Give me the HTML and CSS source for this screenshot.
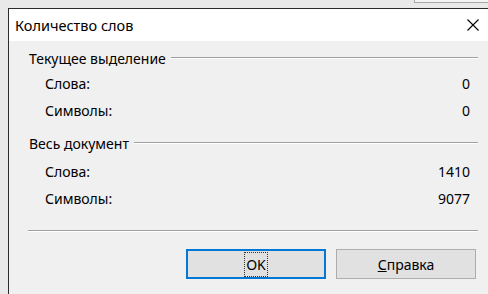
FILE: index.html
```html
<html>
  <head>
    <title>Количество слов</title>
    <link rel="stylesheet" href="styles.css">
  </head>
  <body>
    <div class="topstrip">
      <div class="behind"></div>
    </div>
    <div class="dialog">
      <div class="titlebar">
        <span class="title">Количество слов</span>
        <svg class="close" width="12" height="12" viewBox="0 0 12 12">
          <path d="M0.5 0.5 L11.5 11.5 M11.5 0.5 L0.5 11.5" stroke="#000" stroke-width="1.1" fill="none"/>
        </svg>
      </div>
      <div class="content">
        <div class="group">
          <div class="legend"><span>Текущее выделение</span><div class="rule"></div></div>
          <div class="row first"><span>Слова:</span><span>0</span></div>
          <div class="row"><span>Символы:</span><span>0</span></div>
        </div>
        <div class="group second">
          <div class="legend"><span>Весь документ</span><div class="rule"></div></div>
          <div class="row first"><span>Слова:</span><span>1410</span></div>
          <div class="row"><span>Символы:</span><span>9077</span></div>
        </div>
        <div class="separator"></div>
        <div class="buttons">
          <div class="button default"><span class="focus">OK</span></div>
          <div class="button"><span><u>С</u>правка</span></div>
        </div>
      </div>
    </div>
  </body>
</html>
```

FILE: styles.css
```css
html {
  background: #e9e9e9;
}
body {
  margin: 0;
  padding-left: 8px;
  font-family: "Noto Sans", "Liberation Sans", sans-serif;
  font-size: 14px;
  color: #000;
  overflow: hidden;
}
.topstrip {
  height: 8px;
  display: flex;
  justify-content: flex-end;
}
.behind {
  width: 73px;
  height: 2px;
  border-left: 1px solid #a8a8a8;
  border-bottom: 1px solid #a8a8a8;
  background: #f4f4f4;
}
.dialog {
  border-left: 1px solid #2b2b2b;
  border-top: 1px solid #2b2b2b;
  background: #f0f0f0;
  height: 285px;
}
.titlebar {
  height: 32px;
  background: #fff;
  display: flex;
  align-items: center;
  justify-content: space-between;
  padding-left: 6px;
  padding-right: 9px;
}
.title {
  font-size: 14.5px;
}
.close {
  display: block;
}
.content {
  padding: 8px 10px 0 20px;
}
.legend {
  height: 18px;
  display: flex;
  align-items: center;
}
.rule {
  flex: 1;
  margin-left: 5px;
  height: 0;
  border-top: 1px solid #a0a0a0;
  border-bottom: 1px solid #ffffff;
}
.row {
  height: 27px;
  display: flex;
  align-items: center;
  justify-content: space-between;
  padding-left: 16px;
  padding-right: 8px;
}
.row.first {
  margin-top: 3px;
}
.second {
  margin-top: 10px;
}
.second .row.first {
  margin-top: 6px;
}
.separator {
  margin-top: 18px;
  margin-left: -1px;
  border-top: 1px solid #a0a0a0;
  border-bottom: 1px solid #ffffff;
}
.buttons {
  margin-top: 17px;
  display: flex;
  justify-content: flex-end;
  gap: 10px;
  padding-right: 2px;
}
.button {
  width: 140px;
  height: 30px;
  box-sizing: border-box;
  border: 1px solid #adadad;
  background: #e1e1e1;
  display: flex;
  align-items: center;
  justify-content: center;
}
.button.default {
  border: 2px solid #0078d7;
}
.focus {
  outline: 1px dotted #333;
  padding: 2px 1px;
}
```
